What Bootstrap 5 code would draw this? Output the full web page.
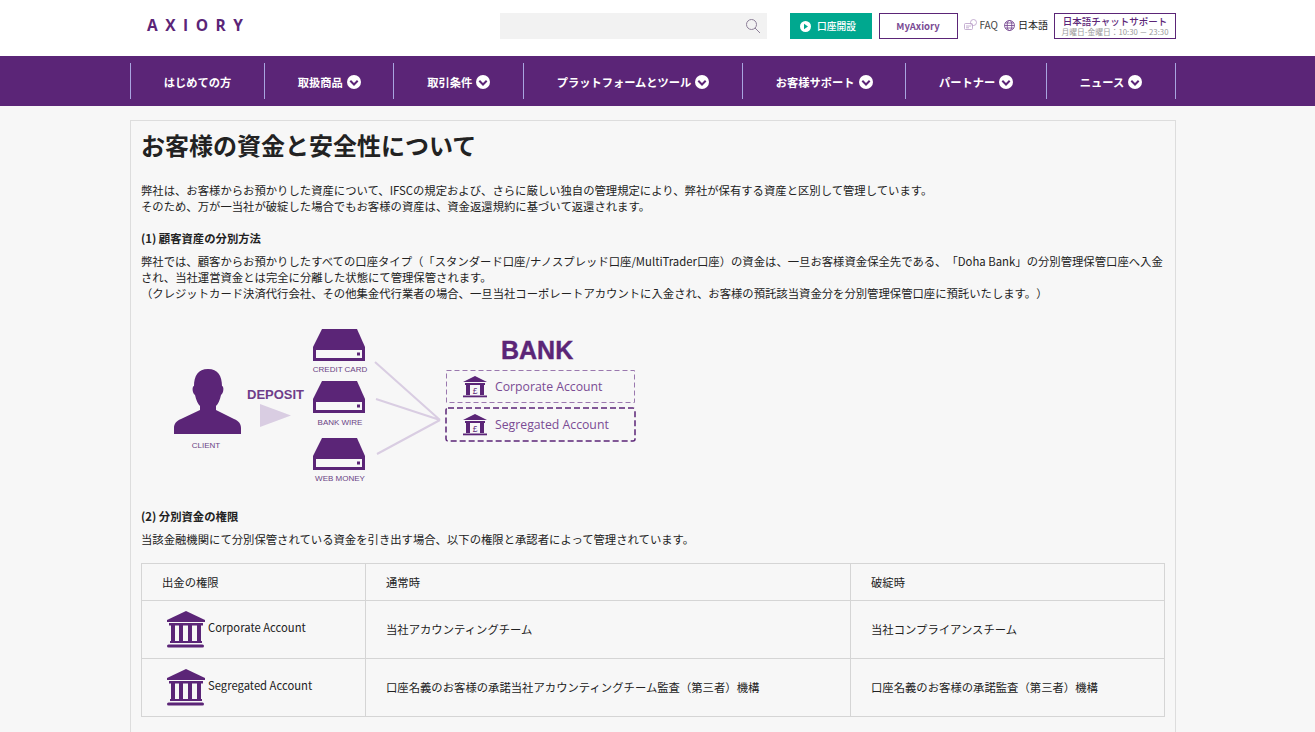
<!DOCTYPE html>
<html lang="ja">
<head>
    <meta charset="UTF-8">
    <meta name="viewport" content="width=device-width, initial-scale=1.0">
    <title>お客様の資金と安全性について</title>
    <link href="https://cdn.jsdelivr.net/npm/bootstrap@5.3.0/dist/css/bootstrap.min.css" rel="stylesheet">
    <style>
        body {
            background-color: #f7f7f7;
            color: #222;
            font-family: "Noto Sans CJK JP", "Noto Sans", sans-serif;
            font-size: 11.35px;
            line-height: 16px;
            text-spacing-trim: space-all;
        }
        .page-wrap {
            width: 1046px;
            margin-left: 130px;
        }
        .top-bar {
            background-color: #fff;
            height: 56px;
        }
        .top-inner {
            height: 56px;
            padding-top: 13px;
        }
        .brand-logo {
            font-family: "Open Sans", sans-serif;
            font-weight: 700;
            font-size: 15.5px;
            line-height: 24px;
            letter-spacing: 7.5px;
            color: #5b2577;
            margin-left: 17px;
            width: 353px;
        }
        .search-box {
            width: 267px;
            height: 26px;
            background-color: #f2f2f2;
            padding-right: 6px;
        }
        .btn-open {
            width: 82px;
            height: 26px;
            margin-left: 23px;
            padding-right: 5px;
            gap: 6px;
            background-color: #00a88f;
            color: #fff;
            font-size: 9.75px;
            font-weight: 500;
        }
        .btn-my {
            width: 79px;
            height: 26px;
            margin-left: 7px;
            border: 1px solid #5b2577;
            color: #7a4b94;
            font-size: 9.5px;
            font-weight: 700;
            background: #fff;
        }
        .top-link {
            font-size: 10px;
            color: #444;
            line-height: 24px;
            white-space: nowrap;
            gap: 3px;
        }
        .top-faq { margin-left: 6px; }
        .top-lang {
            margin-left: 6px;
            margin-right: 6px;
            color: #222;
        }
        .chat-box {
            flex: 0 0 122px;
            height: 26px;
            padding-top: 1px;
            border: 1px solid #5b2577;
            text-align: center;
            color: #5b2577;
            font-size: 9.5px;
            line-height: 12px;
            font-weight: 500;
            white-space: nowrap;
        }
        .chat-hours {
            font-size: 7.75px;
            line-height: 10px;
            color: #999;
            font-weight: 400;
        }
        .main-nav {
            background-color: #5b2577;
            height: 50px;
            padding-top: 7px;
        }
        .nav-cell {
            height: 36px;
            padding-top: 2px;
            flex: 1 1 auto;
            border-left: 1px solid #a9a5e0;
            color: #fff;
            font-size: 11.25px;
            font-weight: 700;
            gap: 4px;
        }
        .nav-cell:last-child {
            border-right: 1px solid #a9a5e0;
        }
        .content-box {
            margin-top: 14px;
            border: 1px solid #ddd;
            padding: 0 10px 20px;
        }
        .page-title {
            font-size: 24px;
            line-height: 32px;
            font-weight: 700;
            margin: 8px 0 21px;
            color: #222;
        }
        .sec-title {
            font-size: 11.35px;
            line-height: 16px;
            font-weight: 700;
            margin: 0 0 7px;
        }
        .para {
            margin-bottom: 16px;
        }
        .diagram {
            display: block;
            margin-top: 28px;
            margin-bottom: 19px;
        }
        .fund-table {
            --bs-table-bg: transparent;
            --bs-table-border-color: #d5d5d5;
            --bs-table-color: #222;
            table-layout: fixed;
            width: 1024px;
            font-size: 11.35px;
            margin: 16px 0 0;
        }
        .fund-table td {
            padding: 0 20px;
            vertical-align: middle;
            line-height: 16px;
        }
        .col-auth { width: 224px; }
        .col-normal { width: 485px; }
        .head-row td { height: 37px; }
        .body-row td { height: 58px; padding-bottom: 2px; }
        .body-row td:first-child { padding-bottom: 0; }
        .acc-cell {
            gap: 3px;
            padding-left: 5px;
            font-size: 11.25px;
        }
        .acc-label {
            margin-top: -6px;
        }
    </style>
</head>
<body>
    <svg width="0" height="0" class="d-block">
        <defs>
            <g id="nav-arrow">
                <circle cx="7" cy="7" r="7" fill="#fff"/>
                <path d="M3.300 5.800L7 9.500l3.700-3.700" fill="none" stroke="#5b2577" stroke-width="2"/>
            </g>
            <g id="bank-large" fill="#5b2577">
                <path d="M19 0L38 9V11H0V9Z"/>
                <rect x="2" y="12" width="34" height="2.500"/>
                <rect x="4" y="14" width="4" height="17"/>
                <rect x="12" y="14" width="4" height="17"/>
                <rect x="21" y="14" width="4" height="17"/>
                <rect x="30" y="14" width="4" height="17"/>
                <rect x="3" y="30" width="32" height="2"/>
                <rect x="0" y="33.500" width="37" height="3" rx="1.500"/>
            </g>
        </defs>
    </svg>

    <header class="top-bar">
        <div class="page-wrap d-flex align-items-start top-inner">
            <div class="brand-logo">AXIORY</div>
            <div class="search-box d-flex align-items-center justify-content-end">
                <svg width="16" height="16" viewBox="0 0 16 16" fill="none" stroke="#8d7f98" stroke-width="1"><circle cx="6.500" cy="6.500" r="5"/><path d="M10 10l5 5"/></svg>
            </div>
            <a class="btn-open d-flex align-items-center justify-content-center text-decoration-none" href="#">
                <svg width="11" height="11" viewBox="0 0 11 11"><circle cx="5.500" cy="5.500" r="5.500" fill="#fff"/><path d="M4 2.800l4 2.700-4 2.700z" fill="#00a88f"/></svg>
                <span>口座開設</span>
            </a>
            <a class="btn-my d-flex align-items-center justify-content-center text-decoration-none" href="#">MyAxiory</a>
            <div class="d-flex top-link top-faq align-items-center">
                <svg width="13" height="13" viewBox="0 0 13 13" fill="none" stroke="#b79cc6" stroke-width=".8"><rect x=".5" y="4.500" width="8" height="6" rx="1"/><circle cx="9.500" cy="3.500" r="3"/><path d="M2 7h5M2 8.800h3"/></svg>
                <span>FAQ</span>
            </div>
            <div class="d-flex top-link top-lang align-items-center">
                <svg width="11" height="11" viewBox="0 0 11 11" fill="none" stroke="#6f3d8a" stroke-width=".8"><circle cx="5.500" cy="5.500" r="5"/><ellipse cx="5.500" cy="5.500" rx="2.300" ry="5"/><path d="M.5 5.500h10M1.200 3h8.600M1.200 8h8.600"/></svg>
                <span>日本語</span>
            </div>
            <div class="chat-box">
                <div>日本語チャットサポート</div>
                <div class="chat-hours">月曜日-金曜日：10:30 － 23:30</div>
            </div>
        </div>
    </header>

    <nav class="main-nav">
        <div class="page-wrap d-flex">
            <div class="nav-cell d-flex align-items-center justify-content-center">はじめての方</div>
            <div class="nav-cell d-flex align-items-center justify-content-center">取扱商品 <svg width="14" height="14"><use href="#nav-arrow"/></svg></div>
            <div class="nav-cell d-flex align-items-center justify-content-center">取引条件 <svg width="14" height="14"><use href="#nav-arrow"/></svg></div>
            <div class="nav-cell d-flex align-items-center justify-content-center">プラットフォームとツール <svg width="14" height="14"><use href="#nav-arrow"/></svg></div>
            <div class="nav-cell d-flex align-items-center justify-content-center">お客様サポート <svg width="14" height="14"><use href="#nav-arrow"/></svg></div>
            <div class="nav-cell d-flex align-items-center justify-content-center">パートナー <svg width="14" height="14"><use href="#nav-arrow"/></svg></div>
            <div class="nav-cell d-flex align-items-center justify-content-center">ニュース <svg width="14" height="14"><use href="#nav-arrow"/></svg></div>
        </div>
    </nav>

    <main class="page-wrap content-box">
        <h1 class="page-title">お客様の資金と安全性について</h1>
        <p class="para">弊社は、お客様からお預かりした資産について、IFSCの規定および、さらに厳しい独自の管理規定により、弊社が保有する資産と区別して管理しています。<br>そのため、万が一当社が破綻した場合でもお客様の資産は、資金返還規約に基づいて返還されます。</p>
        <h2 class="sec-title">(1) 顧客資産の分別方法</h2>
        <p class="mb-0">弊社では、顧客からお預かりしたすべての口座タイプ（「スタンダード口座/ナノスプレッド口座/MultiTrader口座）の資金は、一旦お客様資金保全先である、「Doha Bank」の分別管理保管口座へ入金され、当社運営資金とは完全に分離した状態にて管理保管されます。<br>（クレジットカード決済代行会社、その他集金代行業者の場合、一旦当社コーポレートアカウントに入金され、お客様の預託該当資金分を分別管理保管口座に預託いたします。）</p>

        <svg class="diagram" width="520" height="160" viewBox="0 0 520 160" font-family="'Liberation Sans', sans-serif">
            <defs>
                <g id="drive">
                    <path d="M9 0H44L52 18V32H0V18Z" fill="#5b2577"/>
                    <rect x="3" y="21" width="46" height="8" fill="#f7f7f7"/>
                    <rect x="44" y="23.500" width="3" height="3" fill="#5b2577"/>
                </g>
                <g id="bank-mini" fill="#5b2577">
                    <path d="M12 0L24 6H0Z"/>
                    <rect x="2" y="7" width="20" height="2"/>
                    <rect x="3" y="9" width="4" height="10"/>
                    <rect x="17" y="9" width="4" height="10"/>
                    <text x="12" y="17.500" font-size="8.500" text-anchor="middle">£</text>
                    <rect x="0" y="19.500" width="24" height="1.800"/>
                </g>
            </defs>
            <!-- client -->
            <path d="M67 40c-10 0-14 7-14 17-2 0-2 7 1 9 1 5 3 9 5 11v4L40 90c-5 2-7 5-7 9v6h67v-6c0-4-2-7-7-9L75 81v-4c2-2 4-6 5-11 3-2 3-9 1-9 0-10-4-17-14-17z" fill="#5b2577"/>
            <text x="65" y="119" font-size="8" fill="#6a4384" text-anchor="middle">CLIENT</text>
            <!-- arrow -->
            <text x="106" y="70" font-size="13" font-weight="700" fill="#6f3d8a">DEPOSIT</text>
            <path d="M119 75L150 86.500 119 98Z" fill="#d9cde2"/>
            <!-- drives -->
            <use href="#drive" x="172" y="0"/>
            <text x="199" y="43" font-size="8" fill="#6a4384" text-anchor="middle">CREDIT CARD</text>
            <use href="#drive" x="172" y="52"/>
            <text x="199" y="96" font-size="8" fill="#6a4384" text-anchor="middle">BANK WIRE</text>
            <use href="#drive" x="172" y="109"/>
            <text x="199" y="152" font-size="8" fill="#6a4384" text-anchor="middle">WEB MONEY</text>
            <!-- lines -->
            <path d="M234 33L299 91M235 70L299 91M236 125L299 91" stroke="#d9cde2" stroke-width="2" fill="none"/>
            <!-- bank -->
            <text x="360" y="30" font-size="25" font-weight="700" fill="#5b2577" stroke="#5b2577" stroke-width=".4">BANK</text>
            <rect x="305.500" y="41.500" width="188" height="32" fill="none" stroke="#9a78ae" stroke-width="1" stroke-dasharray="5 3"/>
            <use href="#bank-mini" x="322" y="47"/>
            <text x="354" y="62" font-size="12.250" fill="#7a4b94" font-family="'Open Sans', sans-serif">Corporate Account</text>
            <rect x="305" y="79" width="189" height="33" rx="2" fill="none" stroke="#5b2577" stroke-width="1.500" stroke-dasharray="6 3"/>
            <use href="#bank-mini" x="322" y="85"/>
            <text x="354" y="100" font-size="12.250" fill="#7a4b94" font-family="'Open Sans', sans-serif">Segregated Account</text>
        </svg>

        <h2 class="sec-title">(2) 分別資金の権限</h2>
        <p class="mb-0">当該金融機関にて分別保管されている資金を引き出す場合、以下の権限と承認者によって管理されています。</p>

        <table class="table table-bordered fund-table">
            <colgroup>
                <col class="col-auth">
                <col class="col-normal">
                <col>
            </colgroup>
            <tbody>
                <tr class="head-row">
                    <td>出金の権限</td>
                    <td>通常時</td>
                    <td>破綻時</td>
                </tr>
                <tr class="body-row">
                    <td>
                        <div class="d-flex align-items-center acc-cell">
                            <svg width="38" height="37"><use href="#bank-large"/></svg>
                            <span class="acc-label">Corporate Account</span>
                        </div>
                    </td>
                    <td>当社アカウンティングチーム</td>
                    <td>当社コンプライアンスチーム</td>
                </tr>
                <tr class="body-row">
                    <td>
                        <div class="d-flex align-items-center acc-cell">
                            <svg width="38" height="37"><use href="#bank-large"/></svg>
                            <span class="acc-label">Segregated Account</span>
                        </div>
                    </td>
                    <td>口座名義のお客様の承諾当社アカウンティングチーム監査（第三者）機構</td>
                    <td>口座名義のお客様の承諾監査（第三者）機構</td>
                </tr>
            </tbody>
        </table>
    </main>
    <script src="https://cdn.jsdelivr.net/npm/bootstrap@5.3.0/dist/js/bootstrap.bundle.min.js"></script>
</body>
</html>
